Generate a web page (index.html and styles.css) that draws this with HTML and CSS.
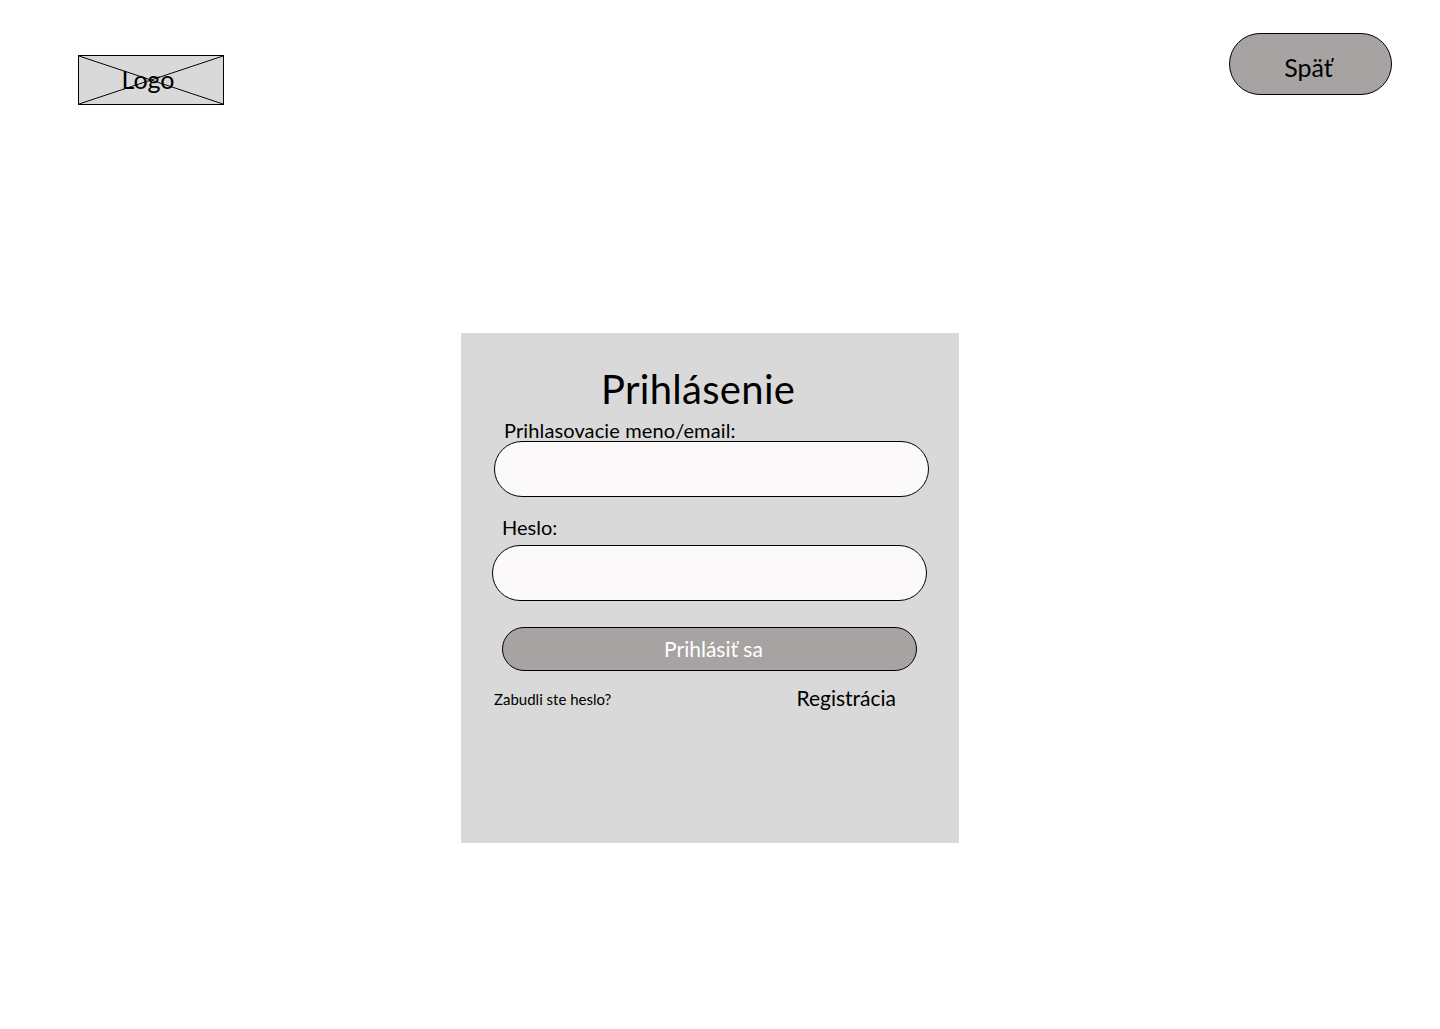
FILE: index.html
```html
<!DOCTYPE html>
<html lang="sk">
<head>
<meta charset="utf-8">
<title>Prihlásenie</title>
<link rel="stylesheet" href="styles.css">
</head>
<body>
<header class="top">
  <div class="logo">
    <svg class="logo-x" viewBox="0 0 146 50" preserveAspectRatio="none" aria-hidden="true">
      <path d="M0 0L146 50M146 0L0 50" fill="none" stroke="#000" stroke-width="1"/>
    </svg>
    <span class="logo-text">Logo</span>
  </div>
  <button class="back" type="button">Späť</button>
</header>
<main class="card">
  <h1 class="title">Prihlásenie</h1>
  <label class="label label-user" for="user">Prihlasovacie meno/email:</label>
  <input class="field field-user" id="user" type="text">
  <label class="label label-pass" for="pass">Heslo:</label>
  <input class="field field-pass" id="pass" type="password">
  <button class="submit" type="button">Prihlásiť sa</button>
  <div class="links">
    <a class="forgot" href="#">Zabudli ste heslo?</a>
    <a class="register" href="#">Registrácia</a>
  </div>
</main>
</body>
</html>
```

FILE: styles.css
```css
* { box-sizing: border-box; }
html, body { margin: 0; padding: 0; }
body {
  background: #fff;
  color: #000;
  font-family: "Lato", "Open Sans", sans-serif;
  min-height: 1029px;
}
.top {
  display: flex;
  justify-content: space-between;
  align-items: flex-start;
  height: 95px;
  padding: 33px 48px 0 78px;
}
.logo {
  position: relative;
  width: 146px;
  height: 50px;
  margin-top: 22px;
  background: #d9d9d9;
  border: 1px solid #000;
  display: flex;
  align-items: center;
  justify-content: center;
}
.logo-x {
  position: absolute;
  inset: 0;
  width: 100%;
  height: 100%;
}
.logo-text {
  position: relative;
  font-size: 25px;
  line-height: 28px;
  margin-left: -6px;
  margin-bottom: 2px;
}
.back {
  width: 163px;
  height: 62px;
  padding: 5px 4px 0 0;
  background: #a7a3a2;
  border: 1px solid #000;
  border-radius: 31px;
  font: inherit;
  font-size: 25px;
  color: #000;
}
.card {
  display: flex;
  flex-direction: column;
  align-items: flex-start;
  width: 498px;
  height: 510px;
  margin: 238px 0 0 461px;
  background: #d9d9d9;
}
.title {
  margin: 32px 0 0 140px;
  font-size: 40px;
  line-height: 48px;
  letter-spacing: 0.3px;
  font-weight: 400;
}
.label {
  font-size: 20px;
  line-height: 24px;
}
.label-user { margin: 5px 0 0 43px; height: 23px; letter-spacing: 0.12px; }
.label-pass { margin: 18px 0 0 41px; height: 30px; }
.field {
  width: 435px;
  height: 56px;
  background: #fbf9fa;
  border: 1px solid #000;
  border-radius: 28px;
  padding: 0 24px;
  outline: none;
}
.field-user { margin-left: 33px; }
.field-pass { margin-left: 31px; }
.submit {
  width: 415px;
  height: 44px;
  margin: 26px 0 0 41px;
  background: #a7a3a2;
  border: 1px solid #000;
  border-radius: 22px;
  font: inherit;
  font-size: 21px;
  color: #fff;
  padding: 0 0 2px 8px;
}
.links {
  display: flex;
  justify-content: space-between;
  align-items: center;
  width: 402px;
  margin: 14px 0 0 33px;
  height: 24px;
}
.links a { color: #000; text-decoration: none; }
.forgot { font-size: 15px; padding-top: 4px; }
.register { font-size: 21px; }
```
